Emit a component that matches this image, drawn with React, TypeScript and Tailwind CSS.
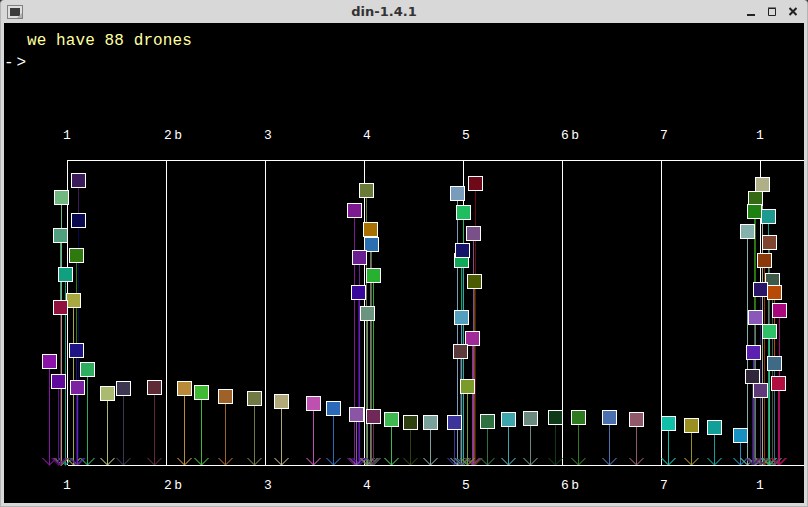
const drones: [number, number, string][] = [
  // first note
  [71, 173, '#3a1a58'], [54, 190, '#70b880'], [71, 213, '#08084e'], [53, 228, '#50a080'],
  [69, 248, '#2e7a0e'], [58, 267, '#10a080'], [66, 293, '#a8a840'], [53, 300, '#90103e'],
  [42, 354, '#8a14a8'], [51, 374, '#5f0a9a'], [69, 343, '#1f1485'], [80, 362, '#2eac60'],
  [70, 380, '#7a22a0'], [100, 386, '#aabb70'], [116, 381, '#3d3650'], [147, 380, '#5e2a35'],
  [177, 381, '#b88a3a'], [194, 385, '#3fb833'], [218, 389, '#9e6228'], [247, 391, '#6f7a45'],
  [274, 394, '#b0a878'], [306, 396, '#c050b0'], [326, 401, '#2a6ab8'],
  // around 4
  [359, 183, '#6a7a38'], [347, 203, '#7e1a90'], [363, 222, '#a87000'], [364, 237, '#2a70b0'],
  [352, 250, '#6a2090'], [366, 268, '#28b030'], [351, 285, '#38089a'], [360, 306, '#6a9480'],
  [349, 407, '#8a55a5'], [366, 409, '#702858'], [384, 412, '#40b850'], [403, 415, '#2e4010'],
  [423, 415, '#7aa09c'], [447, 415, '#3c3498'],
  // around 5
  [468, 176, '#6e0a18'], [450, 186, '#7a9cbc'], [456, 205, '#20bc60'], [466, 226, '#7a5088'],
  [454, 253, '#10a858'], [455, 243, '#141468'], [467, 274, '#4a5a00'], [454, 310, '#54a0bc'],
  [465, 331, '#a02a98'], [453, 344, '#5a3a3a'], [460, 379, '#7a9a2a'], [480, 414, '#2e7040'],
  [501, 412, '#3ea5ac'], [523, 411, '#6a8a80'], [548, 410, '#0e3a1a'], [571, 410, '#2e7a20'],
  [602, 410, '#4a70b0'], [629, 412, '#905868'], [661, 416, '#10c0a8'], [684, 418, '#9a9020'],
  [707, 420, '#10a098'], [733, 428, '#1890c0'],
  // last note
  [755, 177, '#b0b088'], [748, 191, '#356a15'], [747, 204, '#1e8010'], [761, 209, '#1e9a90'],
  [740, 224, '#85b0ac'], [762, 235, '#804530'], [757, 253, '#8a3a08'], [765, 273, '#3e5a48'],
  [753, 282, '#2a1468'], [767, 285, '#b84a08'], [772, 303, '#a8087c'], [748, 310, '#8a58b8'],
  [762, 324, '#30c068'], [746, 345, '#5a20b0'], [767, 356, '#3e6a85'], [745, 369, '#30283a'],
  [753, 383, '#5e3a78'], [771, 376, '#b01040'],
]

const gridX = [67, 166, 265, 364, 463, 562, 661, 760]
const labels: [number, string][] = [
  [63, '1'], [164, '2b'], [264, '3'], [363, '4'], [462, '5'], [561, '6b'], [660, '7'], [756, '1'],
]

function Plot() {
  return (
    <svg className="absolute left-0 top-0" width={800} height={480} viewBox="4 23 800 480" shapeRendering="crispEdges">
      <path d="M67.5 160.5H804" stroke="#fff" fill="none" />
      {gridX.map((x) => (
        <line key={x} x1={x + 0.5} x2={x + 0.5} y1={160} y2={465} stroke="#fff" />
      ))}
      {drones.map(([x, y, c], i) => (
        <g key={i} stroke={c} fill="none">
          <path d={`M${x + 7.5} ${y + 14}V465`} />
          <path d={`M${x + 0.5} 458L${x + 7.5} 465L${x + 14.5} 458`} strokeOpacity={0.65} />
        </g>
      ))}
      <path d="M67.5 465.5H804" stroke="#fff" fill="none" />
      {drones.map(([x, y, c], i) => (
        <rect key={i} x={x + 0.5} y={y + 0.5} width={14} height={14} fill={c} stroke="#fff" />
      ))}
      {labels.map(([x, t], i) => (
        <g key={i} fill="#fff" fontSize={13} fontFamily="'Liberation Mono', monospace" letterSpacing={2.5} shapeRendering="auto">
          <text x={x} y={139}>{t}</text>
          <text x={x} y={489}>{t}</text>
        </g>
      ))}
    </svg>
  )
}

export default function App() {
  return (
    <div className="h-[507px] w-[808px] bg-[#333]">
      <div className="flex h-full flex-col overflow-hidden rounded-t-[4px] border-x border-b border-[#b4b4b4] bg-[#d8d8d8]">
        <div className="flex h-[23px] shrink-0 items-center pl-[6px] pr-[10px]">
          <svg width={16} height={14} viewBox="0 0 16 14" className="shrink-0">
            <rect x={0.5} y={0.5} width={15} height={13} fill="#dedede" stroke="#808080" />
            <rect x={3} y={3} width={10} height={8} fill="#3c3c3c" />
            <path d="M10 13l5-5v5z" fill="#b0b0b0" />
          </svg>
          <span className="-ml-[2px] flex-1 text-center font-['DejaVu_Sans',sans-serif] text-[13px] font-bold text-[#333]">din-1.4.1</span>
          <div className="flex items-center gap-[13px]">
            <svg width={8} height={9} viewBox="0 0 8 9"><rect y={7} width={8} height={2} fill="#222" /></svg>
            <svg width={8} height={9} viewBox="0 0 8 9"><path d="M.5 1.5h7v7h-7zM0 1h8" fill="none" stroke="#222" /></svg>
            <svg width={8} height={9} viewBox="0 0 8 9"><path d="M.5 1l7 7M7.5 1l-7 7" stroke="#222" strokeWidth={2} /></svg>
          </div>
        </div>
        <div className="relative ml-[3px] mr-[3px] mb-[3px] flex-1 bg-black font-['Liberation_Mono',monospace]">
          <div className="pl-[23px] pt-[8px] text-[16px] leading-[20px] tracking-[0.1px] text-[#ffffa0]">we have 88 drones</div>
          <div className="pt-[2px] text-[16px] leading-[20px] tracking-[3px] text-white">-&gt;</div>
          <Plot />
        </div>
      </div>
    </div>
  )
}
